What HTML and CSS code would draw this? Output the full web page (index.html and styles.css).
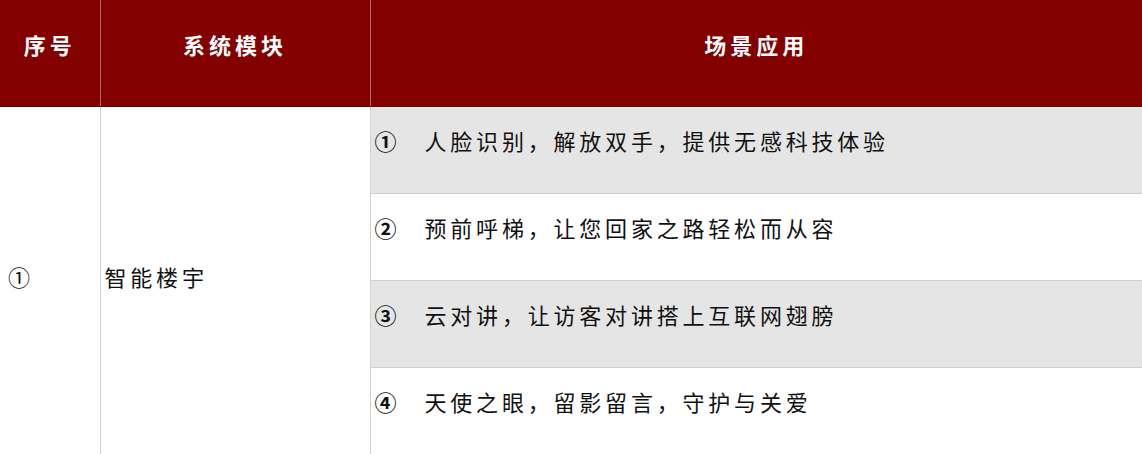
FILE: index.html
```html
<!DOCTYPE html>
<html lang="zh-CN">
<head>
<meta charset="utf-8">
<link rel="stylesheet" href="styles.css">
</head>
<body>
<table class="tbl">
  <colgroup>
    <col class="c1"><col class="c2"><col class="c3">
  </colgroup>
  <thead>
    <tr class="head">
      <th>序号</th>
      <th>系统模块</th>
      <th>场景应用</th>
    </tr>
  </thead>
  <tbody>
    <tr class="row grey">
      <td rowspan="4" class="idx">①</td>
      <td rowspan="4" class="mod">智能楼宇</td>
      <td class="scene"><span class="num">①</span>人脸识别，解放双手，提供无感科技体验</td>
    </tr>
    <tr class="row">
      <td class="scene"><span class="num">②</span>预前呼梯，让您回家之路轻松而从容</td>
    </tr>
    <tr class="row grey">
      <td class="scene"><span class="num">③</span>云对讲，让访客对讲搭上互联网翅膀</td>
    </tr>
    <tr class="row">
      <td class="scene"><span class="num">④</span>天使之眼，留影留言，守护与关爱</td>
    </tr>
  </tbody>
</table>
</body>
</html>
```
FILE: styles.css
```css
html, body {
  margin: 0;
  padding: 0;
  background: #ffffff;
}
body {
  width: 1142px;
  height: 454px;
  overflow: hidden;
  font-family: "Noto Sans CJK SC", "Noto Sans", sans-serif;
}
.tbl {
  width: 1142px;
  border-collapse: collapse;
  table-layout: fixed;
}
.c1 { width: 100px; }
.c2 { width: 270px; }
.c3 { width: 772px; }
.head { height: 106px; }
.tbl th {
  padding: 0 0 18px 0;
  background: #820000;
  color: #ffffff;
  font-weight: 700;
  font-size: 22px;
  letter-spacing: 4px;
  text-align: center;
  border-left: 1px solid #a86a6a;
  border-bottom: 1px solid #5a1010;
}
.tbl th:first-child { border-left: none; }
.row { height: 87px; }
.tbl td {
  color: #111111;
  font-size: 22px;
  letter-spacing: 3.8px;
  border-left: 1px solid #d0d0d0;
  border-bottom: 1px solid #cfcfcf;
  vertical-align: middle;
  padding: 0;
}
.tbl td.idx {
  border-left: none;
  padding: 0 0 8px 8px;
  background: #ffffff;
}
.tbl td.mod {
  padding: 0 0 8px 4px;
  background: #ffffff;
}
.tbl td.scene {
  padding: 0 0 19px 4px;
  border-right: 1px solid #d8d8d8;
}
.tbl tr.grey td.scene { background: #e5e5e5; }
.num {
  display: inline-block;
  width: 50px;
  letter-spacing: 0;
  font-weight: 700;
}
```
